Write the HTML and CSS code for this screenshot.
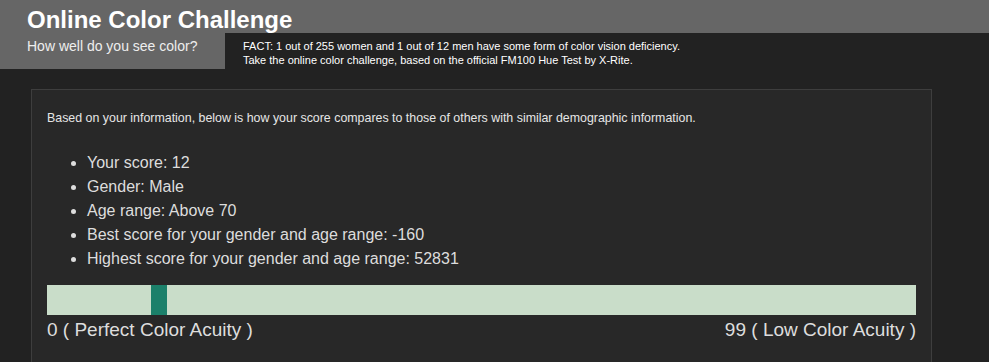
FILE: index.html
```html
<!DOCTYPE html>
<html lang="en">
<head>
    <meta charset="UTF-8">
    <title>Online Color Challenge</title>
    <link rel="stylesheet" href="styles.css">
</head>
<body>
    <!-- Header -->
    <header class="header">
        <h1 class="title">Online Color Challenge</h1>
        <div class="header-row">
            <div class="tagline">How well do you see color?</div>
            <p class="fact">FACT: 1 out of 255 women and 1 out of 12 men have some form of color vision deficiency.<br>
            Take the online color challenge, based on the official FM100 Hue Test by X-Rite.</p>
        </div>
    </header>

    <!-- Results -->
    <div class="results">
        <p class="intro">Based on your information, below is how your score compares to those of others with similar demographic information.</p>
        <ul class="stats">
            <li>Your score: 12</li>
            <li>Gender: Male</li>
            <li>Age range: Above 70</li>
            <li>Best score for your gender and age range: -160</li>
            <li>Highest score for your gender and age range: 52831</li>
        </ul>
        <div class="scale">
            <div class="marker" style="left: 104px"></div>
        </div>
        <div class="scale-labels">
            <span>0 ( Perfect Color Acuity )</span>
            <span>99 ( Low Color Acuity )</span>
        </div>
    </div>
</body>
</html>
```

FILE: styles.css
```css
/* General Styles */
body {
    margin: 0;
    padding: 0;
    background: #222;
    color: #ddd;
    font-family: "Liberation Sans", Arial, sans-serif;
}

.header {
    width: 100%;
}

.title {
    margin: 0;
    height: 33px;
    line-height: 40px;
    padding-left: 27px;
    background: #666;
    color: #fff;
    font-size: 24px;
    font-weight: bold;
    overflow: hidden;
}

.header-row {
    display: flex;
    align-items: flex-start;
}

.tagline {
    width: 198px;
    height: 36px;
    padding-left: 27px;
    background: #666;
    color: #eee;
    font-size: 14px;
    line-height: 26px;
}

.fact {
    margin: 0;
    padding: 6px 0 0 18px;
    color: #fff;
    font-size: 11px;
    line-height: 14px;
}

.results {
    margin: 20px 0 0 31px;
    width: 869px;
    padding: 15px 15px 30px;
    border: 1px solid #3e3e3e;
    background: #282828;
}

.intro {
    margin: 6px 0 0;
    font-size: 12.4px;
    line-height: 14px;
    color: #e6e6e6;
}

.stats {
    margin: 26px 0 0;
    padding-left: 40px;
    font-size: 16px;
    line-height: 24px;
}

.scale {
    position: relative;
    margin-top: 14px;
    height: 30px;
    background: #c9ddc9;
}

.marker {
    position: absolute;
    top: 0;
    width: 16px;
    height: 30px;
    background: #1b806a;
}

.scale-labels {
    display: flex;
    justify-content: space-between;
    margin-top: 4px;
    font-size: 19px;
}
```
